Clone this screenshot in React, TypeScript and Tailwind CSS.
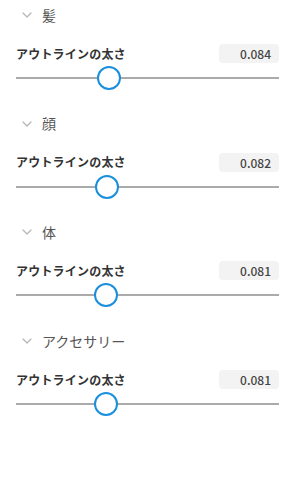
import React from 'react';

interface Section {
  name: string;
  value: number;
}

const sections: Section[] = [
  { name: '髪', value: 0.084 },
  { name: '顔', value: 0.082 },
  { name: '体', value: 0.081 },
  { name: 'アクセサリー', value: 0.081 },
];

const font = { fontFamily: '"Noto Sans CJK JP", "Noto Sans", sans-serif' };

const Chevron = () => (
  <svg width="10" height="6" viewBox="0 0 10 6" fill="none" className="shrink-0">
    <path d="M1 1l4 4 4-4" stroke="#b5b5b5" strokeWidth="1.2" strokeLinecap="round" strokeLinejoin="round" />
  </svg>
);

const App: React.FC = () => {
  return (
    <div className="w-[295px] h-[484px] bg-white" style={font}>
      {sections.map(s => {
        // 0..0.25 の範囲、つまみはトラック内に収める
        const ratio = s.value / 0.25;
        return (
          <div key={s.name} className="px-4 pb-[19.7px]">
            <div className="h-[30px] flex items-center gap-[10px] pl-[6px]">
              <Chevron />
              <span className="text-[14px] text-[#555]">{s.name}</span>
            </div>
            <div className="mt-[14px] h-[19px] flex items-center justify-between">
              <span className="text-[12px] font-bold text-[#333] tracking-[0.2px]">アウトラインの太さ</span>
              <span className="w-[60px] h-[19px] rounded bg-[#f3f3f3] text-right pr-[8px] text-[12px] font-medium leading-[19px] text-[#444]">
                {s.value.toFixed(3)}
              </span>
            </div>
            <div className="mt-[4px] h-[22px] relative">
              <div className="absolute left-0 right-0 top-[10px] h-[2px] bg-[#aaaaaa]" />
              <div
                className="absolute top-0 w-[24px] h-[24px] -mt-[1px] rounded-full border-2 border-[#1a8fdc] bg-white"
                style={{ left: `calc(${ratio} * (100% - 24px) + 0.5px)` }}
              />
            </div>
          </div>
        );
      })}
    </div>
  );
};

export default App;
